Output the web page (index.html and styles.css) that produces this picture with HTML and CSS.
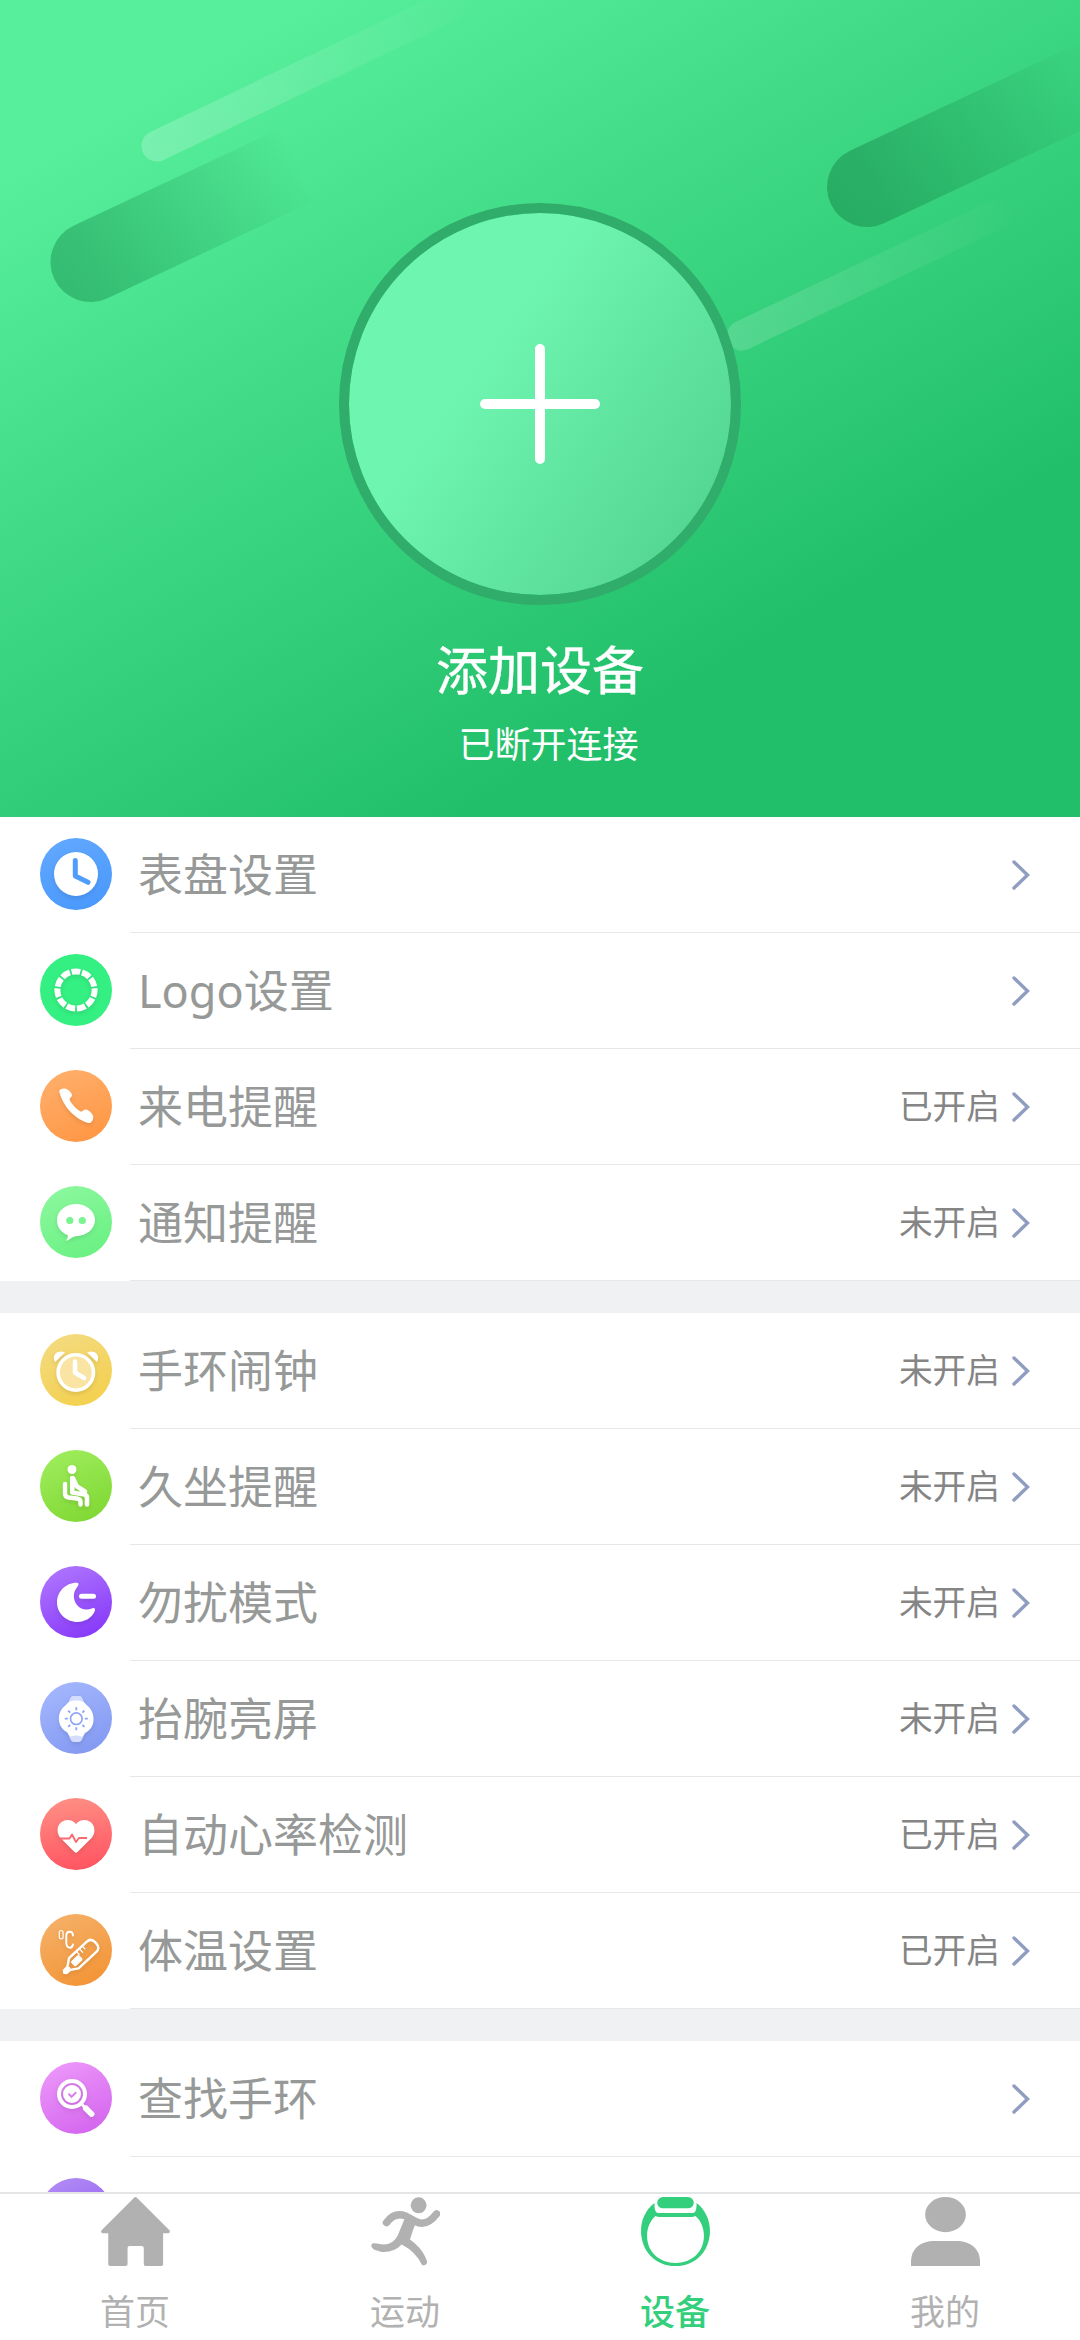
FILE: index.html
```html
<!DOCTYPE html>
<html lang="zh-CN">
<head>
<meta charset="utf-8">
<title>设备</title>
<link rel="stylesheet" href="styles.css">
</head>
<body>
<div class="screen">
  <header class="hero">
    <svg class="hero-art" viewBox="0 0 1080 817" aria-hidden="true">
      <defs>
        <linearGradient id="dark"><stop offset="0" stop-color="#1f9a57" stop-opacity=".56"/><stop offset=".15" stop-color="#1f9a57" stop-opacity=".5"/><stop offset=".9" stop-color="#1f9a57" stop-opacity="0"/></linearGradient>
        <linearGradient id="dark-right"><stop offset="0" stop-color="#1f9a57" stop-opacity=".68"/><stop offset=".15" stop-color="#1f9a57" stop-opacity=".62"/><stop offset=".93" stop-color="#1f9a57" stop-opacity="0"/></linearGradient>
        <linearGradient id="light"><stop offset="0" stop-color="#fff" stop-opacity=".22"/><stop offset="1" stop-color="#fff" stop-opacity="0"/></linearGradient>
        <linearGradient id="light-right"><stop offset="0" stop-color="#fff" stop-opacity=".16"/><stop offset=".95" stop-color="#fff" stop-opacity="0"/></linearGradient>
      </defs>
      <g transform="translate(157 146) rotate(-25.6)"><rect x="-15.500" y="-15.500" width="365" height="31" rx="15.500" fill="url(#light)"/></g>
      <g transform="translate(90.500 262) rotate(-25.200)"><rect x="-40" y="-40" width="300" height="80" rx="40" fill="url(#dark)"/></g>
      <g transform="translate(867 187) rotate(-25.200)"><rect x="-40" y="-40" width="320" height="80" rx="40" fill="url(#dark-right)"/></g>
      <g transform="translate(742 335.500) rotate(-25.400)"><rect x="-15" y="-15" width="345" height="30" rx="15" fill="url(#light-right)"/></g>
    </svg>
    <button class="add" aria-label="添加设备">
      <svg width="120" height="120" viewBox="0 0 120 120"><path d="M60 5v110M5 60h110" stroke="#fff" stroke-width="10" stroke-linecap="round"/></svg>
    </button>
    <h1 class="hero-title">添加设备</h1>
    <p class="hero-status">已断开连接</p>
  </header>

  <main class="list">
    <section class="group">
      <div class="row">
        <span class="icon blue"><svg viewBox="0 0 72 72"><circle cx="36" cy="36" r="22" fill="#fff"/><path d="M35.3 22.5V38L48 44.3" fill="none" stroke="#519dfb" stroke-width="5" stroke-linecap="round" stroke-linejoin="round"/></svg></span>
        <div class="body"><span class="label">表盘设置</span><svg class="chev" viewBox="0 0 18 30"><path d="M2 2l13.500 13L2 28"/></svg></div>
      </div>
      <div class="row">
        <span class="icon mint"><svg viewBox="0 0 72 72"><circle cx="36" cy="36" r="18.600" fill="none" stroke="#fff" stroke-width="6" pathLength="110" stroke-dasharray="8.300 1.700" stroke-dashoffset="-28.300"/></svg></span>
        <div class="body"><span class="label"><span class="latin">Logo</span>设置</span><svg class="chev" viewBox="0 0 18 30"><path d="M2 2l13.500 13L2 28"/></svg></div>
      </div>
      <div class="row">
        <span class="icon orange"><svg viewBox="0 0 72 72"><path d="M19.500 22.500C18 19.500 24 17.500 27 19.200C30 21 33 24 31.600 26.500C30.500 28 28.500 28.500 30.500 31.500C33 35.500 37 39.500 40.500 41.500C42.500 42.300 43 39.500 46 39.500C49 40 53.500 44.500 53.300 47C53.200 50 51.500 53.500 48.500 53C35 49.500 23 36 19.500 22.500z" fill="#fff"/></svg></span>
        <div class="body"><span class="label">来电提醒</span><span class="value">已开启</span><svg class="chev" viewBox="0 0 18 30"><path d="M2 2l13.500 13L2 28"/></svg></div>
      </div>
      <div class="row">
        <span class="icon green"><svg viewBox="0 0 72 72"><path d="M36 18C46.500 18 55 25 55 34S46.500 50 36 50.200C32 50.500 29 54.500 26 54.500C27.500 52.500 28.500 51 27.500 49C21 46.500 17 41 17 34C17 25 25.500 18 36 18z" fill="#fff"/><circle cx="29.800" cy="34.500" r="3.600" fill="#79f490"/><circle cx="42.300" cy="34.500" r="3.600" fill="#79f490"/></svg></span>
        <div class="body"><span class="label">通知提醒</span><span class="value">未开启</span><svg class="chev" viewBox="0 0 18 30"><path d="M2 2l13.500 13L2 28"/></svg></div>
      </div>
    </section>

    <section class="group">
      <div class="row">
        <span class="icon yellow"><svg viewBox="0 0 72 72"><path d="M15 28C11 21 18 15 25 18.500zM57 28C61 21 54 15 47 18.500z" fill="#fff"/><circle cx="35.800" cy="38.500" r="17.700" fill="#f9e4a4" stroke="#fff" stroke-width="3.600"/><path d="M35 27.500V38.500L44 44" fill="none" stroke="#fff" stroke-width="4.600" stroke-linecap="round" stroke-linejoin="round"/></svg></span>
        <div class="body"><span class="label">手环闹钟</span><span class="value">未开启</span><svg class="chev" viewBox="0 0 18 30"><path d="M2 2l13.500 13L2 28"/></svg></div>
      </div>
      <div class="row">
        <span class="icon lime"><svg viewBox="0 0 72 72"><circle cx="32" cy="19.500" r="4.500" fill="#fff"/><path d="M25 34V43.500Q25 47 28.500 47.500L37 48.500Q40.500 49 40.500 52V54.500" fill="none" stroke="#fff" stroke-width="4.400" stroke-linecap="round" stroke-linejoin="round"/><path d="M32.300 28V42.500L44.500 44.500Q47 45 47 48V54.500M33 28.500L37 36.500L45 41.500" fill="none" stroke="#fff" stroke-width="4.600" stroke-linecap="round" stroke-linejoin="round"/></svg></span>
        <div class="body"><span class="label">久坐提醒</span><span class="value">未开启</span><svg class="chev" viewBox="0 0 18 30"><path d="M2 2l13.500 13L2 28"/></svg></div>
      </div>
      <div class="row">
        <span class="icon purple"><svg viewBox="0 0 72 72"><path d="M37 16.800C39 17 39 18.500 37.500 20.500C33 26 32.500 33 37 39C41 44 47 44.500 52.500 42.300C54.500 41.500 55.500 43 54.800 45C52 52 44.500 56 37.500 56C26 56 17 47 17 36.500C17 25.500 26 16.500 37 16.800z" fill="#fff"/><path d="M41.500 30.200h12" stroke="#fff" stroke-width="5" stroke-linecap="round"/></svg></span>
        <div class="body"><span class="label">勿扰模式</span><span class="value">未开启</span><svg class="chev" viewBox="0 0 18 30"><path d="M2 2l13.500 13L2 28"/></svg></div>
      </div>
      <div class="row">
        <span class="icon peri"><svg viewBox="0 0 72 72"><path d="M28 23Q30 14 33 14H40Q42 14 45 23ZM28 50Q30 60 34 60H39Q42 60 45 50Z" fill="#d5ddff"/><path d="M36.300 18.500C41 18.500 44 19.500 46.500 23C55.500 29 56 44 47.500 49.500C44 51 44 54 41.500 54.500Q36 52.500 31 54.500C28.500 54 28.500 51 26 49.500C16.500 44 16.500 29 26 23C28.500 19.500 31.500 18.500 36.300 18.500z" fill="#fff"/><circle cx="36.300" cy="36.700" r="5.800" fill="none" stroke="#8ea4f6" stroke-width="1.700"/><path d="M36.300 25.300v3M36.300 45.200v3M24.800 36.700h3M44.800 36.700h3M28.200 28.600l2 2M42.400 42.800l2 2M28.200 44.800l2-2M42.400 30.600l2-2" stroke="#8ea4f6" stroke-width="1.800"/></svg></span>
        <div class="body"><span class="label">抬腕亮屏</span><span class="value">未开启</span><svg class="chev" viewBox="0 0 18 30"><path d="M2 2l13.500 13L2 28"/></svg></div>
      </div>
      <div class="row">
        <span class="icon red"><svg viewBox="0 0 72 72"><path d="M36 26C39.500 21.500 46 20.500 50.500 24C55.500 28 55.500 35 52 39.500L37.500 54Q36 55.500 34.500 54L20 39.500C16.500 35 16.500 28 21.500 24C26 20.500 32.500 21.500 36 26z" fill="#fff"/><path d="M20 40.500H29.500L32 36.500L36 44L39 40H47" fill="none" stroke="#f96970" stroke-width="1.800" stroke-linejoin="round"/></svg></span>
        <div class="body"><span class="label">自动心率检测</span><span class="value">已开启</span><svg class="chev" viewBox="0 0 18 30"><path d="M2 2l13.500 13L2 28"/></svg></div>
      </div>
      <div class="row">
        <span class="icon amber"><svg viewBox="0 0 72 72" fill="none" stroke="#fff" stroke-linecap="round" stroke-linejoin="round"><rect x="19.300" y="16.500" width="3.800" height="8.500" rx="1.900" stroke-width="1.200"/><path d="M33 21.500C32.800 16.500 26.500 16.500 26.300 21.500V28.500C26.500 35 32 35 33 30.500" stroke-width="1.900"/><g transform="translate(25 57.500) rotate(-43)"><path d="M0-1.500L5-1.800L12-7H36Q42-7 42-1V1Q42 7 36 7H12L5 2.500L0 2.200Q-2 .5 0-1.500z" stroke-width="2.400"/><path d="M-1 .3H5" stroke-width="3"/><rect x="11" y="-2.800" width="10" height="5.800" rx="1" fill="#fff" stroke-width="1"/><path d="M22-6V-3M26-6V-2M30-6V-3" stroke-width="1.300"/></g></svg></span>
        <div class="body"><span class="label">体温设置</span><span class="value">已开启</span><svg class="chev" viewBox="0 0 18 30"><path d="M2 2l13.500 13L2 28"/></svg></div>
      </div>
    </section>

    <section class="group">
      <div class="row">
        <span class="icon pink"><svg viewBox="0 0 72 72"><circle cx="32" cy="32" r="13" fill="none" stroke="#fff" stroke-width="4"/><circle cx="32" cy="32" r="9" fill="#fff"/><path d="M28.500 31.800l3 3l4.800-4.500" fill="none" stroke="#de7df0" stroke-width="2"/><path d="M42 42.500L46 46.500" stroke="#fff" stroke-width="3"/><path d="M46 46.500L51.500 52" stroke="#fff" stroke-width="6" stroke-linecap="round"/></svg></span>
        <div class="body"><span class="label">查找手环</span><svg class="chev" viewBox="0 0 18 30"><path d="M2 2l13.500 13L2 28"/></svg></div>
      </div>
      <div class="row"><span class="icon violet"></span></div>
    </section>
  </main>

  <nav class="tabs">
    <div class="tab">
      <svg viewBox="0 0 200 208" preserveAspectRatio="none" fill="currentColor"><path d="M96 2Q100-2 104 2L199 101Q202 110 193 109H180V203Q180 208 175 208H129Q124 208 124 203V154Q124 148 118 148H83Q77 148 77 154V203Q77 208 72 208H26Q21 208 21 203V109H7Q-2 110 1 101z"/></svg>
      <span>首页</span>
    </div>
    <div class="tab">
      <svg viewBox="0 0 200 208" preserveAspectRatio="none" fill="none" stroke="currentColor" stroke-linecap="round" stroke-linejoin="round"><ellipse cx="138" cy="25" rx="23" ry="24" fill="currentColor" stroke="none"/><path d="M45 77Q68 45 100 57L128 73Q160 92 190 51" stroke-width="22"/><path d="M98 64L131 76Q121 99 113 128Q127 138 140 153Q158 176 163 197Q160 208 148 205Q130 165 89 143Q65 169 28 165L8 158Q-4 148 4 140Q12 138 24 142Q62 149 78 115Q90 84 98 64z" fill="currentColor" stroke="none"/></svg>
      <span>运动</span>
    </div>
    <div class="tab active">
      <svg viewBox="0 0 200 208" preserveAspectRatio="none"><g fill="currentColor"><path fill-rule="evenodd" d="M39 18C-8 55-10 125 20 168C58 222 142 222 180 168C210 125 208 55 161 18Q162 47 150 48H50Q38 47 39 18zM42 57Q47 60 54 60H146Q153 60 158 57C190 85 190 145 161 174C129 207 71 207 39 174C10 145 10 85 42 57z"/><rect x="47" y="0" width="106" height="34" rx="17"/></g></svg>
      <span>设备</span>
    </div>
    <div class="tab">
      <svg viewBox="0 0 200 208" preserveAspectRatio="none" fill="currentColor"><ellipse cx="100" cy="53" rx="59" ry="53"/><path d="M0 208V190Q5 140 60 133H140Q195 140 200 190V208z"/></svg>
      <span>我的</span>
    </div>
  </nav>
</div>
</body>
</html>
```
FILE: styles.css
```css
* { box-sizing: border-box; }
body {
  margin: 0;
  background: #fff;
  font-family: "Noto Sans CJK SC", sans-serif;
}
.screen {
  width: 1080px;
  height: 2340px;
  display: flex;
  flex-direction: column;
  overflow: hidden;
}
.hero {
  position: relative;
  flex: none;
  height: 817px;
  padding-top: 203px;
  display: flex;
  flex-direction: column;
  align-items: center;
  color: #fff;
  background: linear-gradient(150deg, #57ef9c 12%, #22bf6a 75%);
}
.hero-art { position: absolute; inset: 0; width: 1080px; height: 817px; }
.add {
  position: relative;
  width: 402px;
  height: 402px;
  padding: 0;
  display: grid;
  place-items: center;
  border: 10px solid #30ac6b;
  border-radius: 50%;
  background: linear-gradient(125deg, #6ef5b0 36%, #52d590 90%) padding-box;
}
.hero-title {
  margin: 27px 0 0;
  font-size: 52px;
  line-height: 72px;
  font-weight: 400;
  -webkit-text-stroke: .4px #fff;
}
.hero-status {
  margin: 12px 0 0;
  padding-left: 17px;
  font-size: 36px;
  line-height: 52px;
}
.list { flex: 1; min-height: 0; overflow: hidden; background: #eff1f3; }
.group { background: #fff; margin-bottom: 32px; }
.row { height: 116px; display: flex; align-items: stretch; padding-left: 40px; }
.icon {
  flex: none;
  width: 72px;
  height: 72px;
  margin: 21px 18px 0 0;
  border-radius: 50%;
}
.icon svg {
  display: block;
  width: 72px;
  height: 72px;
  filter: drop-shadow(0 2px 2px rgba(0, 0, 0, .1));
}
.blue { background: linear-gradient(160deg, #63a9ff, #4797fc); }
.mint { background: #34ef81; }
.orange { background: linear-gradient(155deg, #ffb16f, #ff9440); }
.green { background: linear-gradient(155deg, #8ff8a0, #66f080); }
.yellow { background: linear-gradient(155deg, #f4db84, #f3cf48); }
.lime { background: linear-gradient(155deg, #a1ee60, #7dd62f); }
.purple { background: linear-gradient(155deg, #b27bff, #8332f8); }
.peri { background: linear-gradient(155deg, #a7b9ff, #7f96f0); }
.red { background: linear-gradient(170deg, #ff9287, #ff505f); }
.amber { background: linear-gradient(155deg, #f5b36d, #f39130); }
.pink { background: linear-gradient(155deg, #ee9cfb, #d260ed); }
.violet { background: linear-gradient(155deg, #b490f5, #8a4ff0); }
.body {
  flex: 1;
  display: flex;
  align-items: center;
  padding: 0 50px 0 8px;
  border-bottom: 1px solid #e6e7e8;
}
.label { flex: 1; padding-bottom: 4px; font-size: 45px; line-height: 64px; color: #969997; }
.latin { font-family: "Noto Sans", sans-serif; line-height: 1; }
.value { margin-right: 12px; padding-bottom: 3px; font-size: 33.700px; line-height: 48px; color: #858585; }
.chev { width: 18px; height: 30px; fill: none; stroke: #8f9dc0; stroke-width: 3.400; stroke-linecap: round; }
.tabs {
  flex: none;
  height: 148px;
  display: grid;
  grid-template-columns: repeat(4, 1fr);
  border-top: 2px solid #e4e5e6;
  background: #fff;
}
.tab {
  display: flex;
  flex-direction: column;
  align-items: center;
  padding-top: 3px;
  color: #b1b1b1;
  font-size: 35px;
  line-height: 48px;
}
.tab svg { width: 69px; height: 69px; margin-bottom: 20px; }
.active { color: #34cf7c; font-weight: 500; }
```
